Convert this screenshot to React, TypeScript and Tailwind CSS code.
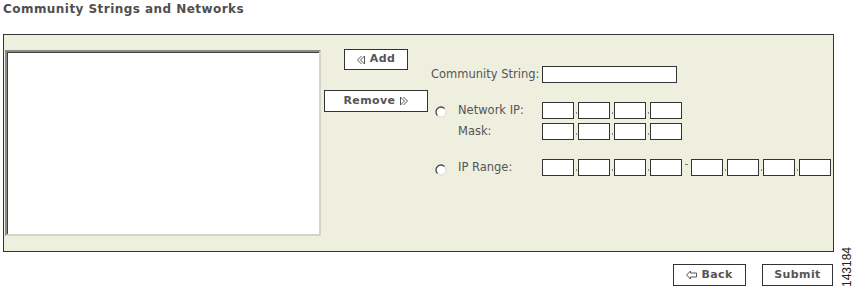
import React from 'react';

function Radio() {
  return (
    <svg width="12" height="12" viewBox="0 0 12 12" className="block">
      <circle cx="6" cy="6" r="5" fill="#fff" stroke="#dcdcd4" strokeWidth="1" />
      <path d="M 9.54 2.46 A 5 5 0 0 0 2.46 9.54" fill="none" stroke="#4a4a4a" strokeWidth="1.3" />
    </svg>
  );
}

function Chevrons({ dir }: { dir: 'left' | 'right' }) {
  return (
    <svg width="9" height="10" viewBox="0 0 9 10" className={`block ${dir === 'right' ? '-scale-x-100' : ''}`}>
      <polyline points="4.5,1 0.5,5 4.5,9" fill="none" stroke="#555" strokeWidth="1" />
      <polygon points="3.5,5 7.5,1 7.5,9" fill="none" stroke="#555" strokeWidth="1" />
    </svg>
  );
}

function BackArrow() {
  return (
    <svg width="11" height="10" viewBox="0 0 11 10" className="block">
      <polygon points="0.5,5 4.5,1 4.5,3 10.5,3 10.5,7 4.5,7 4.5,9" fill="none" stroke="#555" strokeWidth="1" />
    </svg>
  );
}

function Box({ w = 32 }: { w?: number }) {
  return <input className="h-[17px] bg-white border border-[#333] outline-none" style={{ width: w }} />;
}

function Dot() {
  return (
    <span className="w-[4px] h-[17px] flex justify-center items-end pb-[5px]">
      <span className="w-[1px] h-[2px] bg-[#888]" />
    </span>
  );
}

function Quad() {
  return (
    <div className="flex">
      <Box />
      <Dot />
      <Box />
      <Dot />
      <Box />
      <Dot />
      <Box />
    </div>
  );
}

function Btn({ children, className }: { children: React.ReactNode; className: string }) {
  return (
    <button className={`bg-white border border-[#333] flex items-center justify-center gap-[4px] text-[11px] font-bold tracking-[0.4px] text-[#555] ${className}`}>
      {children}
    </button>
  );
}

export default function App() {
  return (
    <div className="w-[853px] h-[290px] bg-white font-['DejaVu_Sans',sans-serif] text-[#555] overflow-hidden">
      <h1 className="h-[34px] pl-[3px] pt-[1px] text-[12px] font-bold tracking-[0.45px] text-[#4f4f4f] leading-[16px]">
        Community Strings and Networks
      </h1>

      <div className="ml-[3px] w-[831px] h-[218px] border border-[#333] bg-[#efefe0] flex items-start pt-[15px] pl-[1px]">
        {/* list of strings */}
        <div className="w-[316px] h-[186px] bg-white border-2 border-t-[#8a8a8a] border-l-[#8a8a8a] border-r-[#d4d4cc] border-b-[#d4d4cc] shadow-[inset_1px_1px_0_#404040]" />

        <div className="ml-[3px] w-[104px] -mt-[1px] flex flex-col items-center">
          <Btn className="w-[64px] h-[21px]">
            <Chevrons dir="left" />
            Add
          </Btn>
          <Btn className="w-[104px] h-[22px] mt-[20px]">
            Remove
            <Chevrons dir="right" />
          </Btn>
        </div>

        <div className="ml-[3px] flex flex-col text-[11.5px] leading-[17px]">
          <div className="mt-[16px] flex items-center">
            <span className="w-[111px]">Community String:</span>
            <Box w={135} />
          </div>

          <div className="mt-[19px] flex items-center">
            <span className="w-[27px] pl-[4px] pt-[2px]">
              <Radio />
            </span>
            <span className="w-[84px]">Network IP:</span>
            <Quad />
          </div>
          <div className="mt-[4px] flex items-center">
            <span className="w-[111px] pl-[27px]">Mask:</span>
            <Quad />
          </div>

          <div className="mt-[19px] flex items-center">
            <span className="w-[27px] pl-[4px] pt-[5px]">
              <Radio />
            </span>
            <span className="w-[84px]">IP Range:</span>
            <Quad />
            <span className="w-[9px] h-[17px] flex justify-center items-start pt-[5px]">
              <span className="w-[3px] h-[1px] bg-[#777]" />
            </span>
            <Quad />
          </div>
        </div>
      </div>

      <div className="-mt-[6px] flex justify-end items-end pr-[1px]">
        <Btn className="w-[73px] h-[22px]">
          <BackArrow />
          Back
        </Btn>
        <Btn className="ml-[16px] w-[71px] h-[22px]">Submit</Btn>
        <span className="ml-[9px] w-[10px] h-[41px] [writing-mode:vertical-rl] rotate-180 font-['Liberation_Sans',sans-serif] text-[12px] leading-[10px] text-[#222] mb-[-1px]">
          143184
        </span>
      </div>
    </div>
  );
}
